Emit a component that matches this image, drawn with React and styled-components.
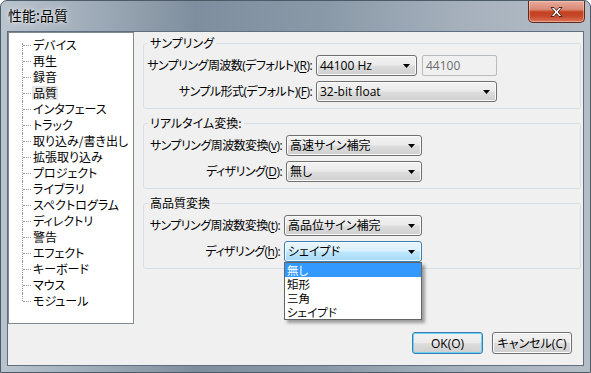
import React from "react";
import styled, { createGlobalStyle, css } from "styled-components";

const GlobalStyle = createGlobalStyle`
  * { box-sizing: border-box; }
  body {
    margin: 0;
    background: #ffffff;
    font-family: "Open Sans", "Noto Sans CJK JP", sans-serif;
    font-size: 12px;
    font-feature-settings: "palt";
    color: #000;
  }
`;

const pages = [
  "デバイス",
  "再生",
  "録音",
  "品質",
  "インタフェース",
  "トラック",
  "取り込み/書き出し",
  "拡張取り込み",
  "プロジェクト",
  "ライブラリ",
  "スペクトログラム",
  "ディレクトリ",
  "警告",
  "エフェクト",
  "キーボード",
  "マウス",
  "モジュール",
];

const ditherOptions = ["無し", "矩形", "三角", "シェイプド"];

const Arrow = () => (
  <ArrowIcon width="7" height="4" viewBox="0 0 7 4">
    <path d="M0 0h7L3.5 4z" fill="#000" />
  </ArrowIcon>
);

const Combo = ({ value, width, active, children }) => (
  <Select $width={width} $active={active}>
    <SelectValue>{value}</SelectValue>
    <Arrow />
    {children}
  </Select>
);

const App = () => {
  return (
    <>
      <GlobalStyle />
      <Window>
        <TitleBar>
          <Title>性能:品質</Title>
          <CloseButton>
            <svg width="15" height="12" viewBox="0 0 15 12">
              <path
                d="M2 1.5h3l2.5 3 2.5-3h3l-4 4.5 4 4.5h-3l-2.5-3-2.5 3h-3l4-4.5z"
                fill="#fff"
                stroke="#3b1d17"
                strokeWidth="0.9"
                strokeLinejoin="round"
              />
            </svg>
          </CloseButton>
        </TitleBar>

        <Client>
          <Main>
            <TreeBox>
              <Tree>
                {pages.map((p, i) => (
                  <TreeItem key={p} $first={i === 0} $last={i === pages.length - 1}>
                    <TreeLabel $selected={p === "品質"}>{p}</TreeLabel>
                  </TreeItem>
                ))}
              </Tree>
            </TreeBox>

            <Panel>
              <Group>
                <Legend>サンプリング</Legend>
                <Rows>
                  <Row>
                    <Label $width={164}>
                      サンプリング周波数(デフォルト)(<u>R</u>):
                    </Label>
                    <Combo value="44100 Hz" width={101} />
                    <TextBox>44100</TextBox>
                  </Row>
                  <Row>
                    <Label $width={164}>
                      サンプル形式(デフォルト)(<u>F</u>):
                    </Label>
                    <Combo value="32-bit float" width={181} />
                  </Row>
                </Rows>
              </Group>

              <Group>
                <Legend>リアルタイム変換:</Legend>
                <Rows>
                  <Row>
                    <Label $width={134}>
                      サンプリング周波数変換(<u>v</u>):
                    </Label>
                    <Combo value="高速サイン補完" width={136} />
                  </Row>
                  <Row>
                    <Label $width={134}>
                      ディザリング(<u>D</u>):
                    </Label>
                    <Combo value="無し" width={136} />
                  </Row>
                </Rows>
              </Group>

              <Group>
                <Legend>高品質変換</Legend>
                <Rows>
                  <Row>
                    <Label $width={132}>
                      サンプリング周波数変換(<u>t</u>):
                    </Label>
                    <Combo value="高品位サイン補完" width={138} />
                  </Row>
                  <Row>
                    <Label $width={132}>
                      ディザリング(<u>h</u>):
                    </Label>
                    <Combo value="シェイプド" width={138} active>
                      <Popup>
                        {ditherOptions.map((o, i) => (
                          <Option key={o} $highlighted={i === 0}>
                            {o}
                          </Option>
                        ))}
                      </Popup>
                    </Combo>
                  </Row>
                </Rows>
              </Group>
            </Panel>
          </Main>

          <Buttons>
            <Button $default $width={71}>
              OK(O)
            </Button>
            <Button $width={80}>キャンセル(C)</Button>
          </Buttons>
        </Client>
      </Window>
    </>
  );
};

const Window = styled.div`
  width: 591px;
  height: 373px;
  display: flex;
  flex-direction: column;
  border: 1px solid #4d5a68;
  border-radius: 7px 7px 0 0;
  overflow: hidden;
  background: linear-gradient(
    90deg,
    #bac4ce 0%,
    #a5b1bd 12%,
    #7f8e9e 33%,
    #8a99a8 55%,
    #a5b0bc 78%,
    #b5bec7 100%
  );
`;

const TitleBar = styled.div`
  height: 30px;
  flex: none;
  display: flex;
  align-items: flex-start;
  justify-content: space-between;
  padding-left: 7px;
`;

const Title = styled.div`
  margin-top: 6px;
  font-family: "Noto Sans CJK JP", sans-serif;
  font-size: 14px;
  line-height: 17px;
  color: #000;
  text-shadow: 0 0 6px rgba(255, 255, 255, 0.9), 0 0 2px rgba(255, 255, 255, 0.7);
`;

const CloseButton = styled.div`
  width: 57px;
  height: 22px;
  margin-right: 5px;
  display: flex;
  align-items: center;
  justify-content: center;
  border: 1px solid #5b2a20;
  border-top: none;
  border-radius: 0 0 5px 5px;
  background: linear-gradient(
    180deg,
    #e9aa9c 0%,
    #da8a76 40%,
    #c4401f 52%,
    #c5482a 72%,
    #de7658 100%
  );
  box-shadow: inset 0 0 0 1px rgba(255, 220, 210, 0.45);
`;

const Client = styled.div`
  flex: 1;
  margin: 0 6px 6px 6px;
  border: 1px solid #5f6f80;
  background: #f0f0f0;
  display: flex;
  flex-direction: column;
`;

const Main = styled.div`
  height: 292px;
  display: flex;
  align-items: flex-start;
`;

const TreeBox = styled.div`
  width: 126px;
  height: 292px;
  flex: none;
  background: #fff;
  border: 1px solid #828790;
  padding-top: 4px;
`;

const Tree = styled.ul`
  list-style: none;
  margin: 0;
  padding: 0;
`;

const TreeItem = styled.li`
  position: relative;
  height: 16px;
  display: flex;
  align-items: center;
  padding-left: 23px;
  font-family: "Noto Sans CJK JP", sans-serif;

  &::before {
    content: "";
    position: absolute;
    left: 13px;
    top: ${(p) => (p.$first ? "6px" : "0")};
    bottom: ${(p) => (p.$last ? "8px" : "0")};
    border-left: 1px dotted #9a9a9a;
  }
  &::after {
    content: "";
    position: absolute;
    left: 14px;
    top: 8px;
    width: 8px;
    border-top: 1px dotted #9a9a9a;
  }
`;

const TreeLabel = styled.span`
  padding: 0 1px;
  line-height: 14px;
  white-space: nowrap;
  ${(p) =>
    p.$selected &&
    css`
      background: #e6e6e6;
    `}
`;

const Panel = styled.div`
  flex: 1;
  margin-left: 9px;
  padding: 4px 2px 0 0;
`;

const Group = styled.fieldset`
  margin: 0 0 7px;
  padding: 0 4px 6px 4px;
  border: 1px solid #d5dfe5;
  border-radius: 3px;
  min-width: 0;
`;

const Legend = styled.legend`
  padding: 0 2px;
  line-height: 14px;
  font-family: "Noto Sans CJK JP", sans-serif;
`;

const Rows = styled.div`
  padding-top: 5px;
  display: flex;
  flex-direction: column;
  gap: 5px;
`;

const Row = styled.div`
  height: 21px;
  display: flex;
  align-items: center;
  gap: 4px;
`;

const Label = styled.div`
  width: ${(p) => p.$width}px;
  flex: none;
  display: flex;
  justify-content: flex-end;
  white-space: nowrap;
  line-height: 14px;
  letter-spacing: -0.55px;

  u {
    text-underline-offset: 2px;
  }
`;

const Select = styled.div`
  position: relative;
  width: ${(p) => p.$width}px;
  height: 21px;
  flex: none;
  display: flex;
  align-items: center;
  padding: 0 6px 0 3px;
  border: 1px solid #707070;
  border-radius: 3px;
  background: linear-gradient(180deg, #f2f2f2 0%, #ebebeb 48%, #dddddd 52%, #cfcfcf 100%);
  box-shadow: inset 0 0 0 1px #fbfbfb;
  ${(p) =>
    p.$active &&
    css`
      border-color: #3c7fb1;
      background: linear-gradient(180deg, #eaf6fd 0%, #d9f0fc 48%, #bee6fd 52%, #a7d9f5 100%);
      box-shadow: inset 0 0 0 1px #f4fbfe;
    `}
`;

const SelectValue = styled.span`
  flex: 1;
  white-space: nowrap;
  overflow: hidden;
  line-height: 15px;
`;

const ArrowIcon = styled.svg`
  flex: none;
  display: block;
`;

const TextBox = styled.div`
  width: 75px;
  height: 21px;
  flex: none;
  margin-left: 1px;
  padding-left: 3px;
  display: flex;
  align-items: center;
  border: 1px solid #b8bcbf;
  border-radius: 2px;
  background: #f0f0f0;
  color: #6d6d6d;
  line-height: 15px;
`;

const Popup = styled.ul`
  position: absolute;
  left: -1px;
  top: 20px;
  width: 138px;
  margin: 0;
  padding: 0;
  list-style: none;
  background: #fff;
  border: 1px solid #646464;
  box-shadow: 3px 3px 3px rgba(0, 0, 0, 0.35);
  z-index: 10;
`;

const Option = styled.li`
  height: 14px;
  display: flex;
  align-items: center;
  padding-left: 2px;
  font-family: "Noto Sans CJK JP", sans-serif;
  font-size: 11.5px;
  line-height: 12px;
  ${(p) =>
    p.$highlighted &&
    css`
      background: #3399ff;
      color: #fff;
    `}
`;

const Buttons = styled.div`
  margin-top: 8px;
  display: flex;
  justify-content: flex-end;
  gap: 9px;
  padding-right: 11px;
`;

const Button = styled.div`
  width: ${(p) => p.$width}px;
  height: 22px;
  display: flex;
  align-items: center;
  justify-content: center;
  border: 1px solid #707070;
  border-radius: 3px;
  background: linear-gradient(180deg, #f2f2f2 0%, #ebebeb 48%, #dddddd 52%, #cfcfcf 100%);
  box-shadow: inset 0 0 0 1px #fbfbfb;
  white-space: nowrap;
  line-height: 15px;
  ${(p) =>
    p.$default &&
    css`
      border-color: #3c7fb1;
      box-shadow: inset 0 0 0 1px #6fd0f7;
    `}
`;

export default App;
